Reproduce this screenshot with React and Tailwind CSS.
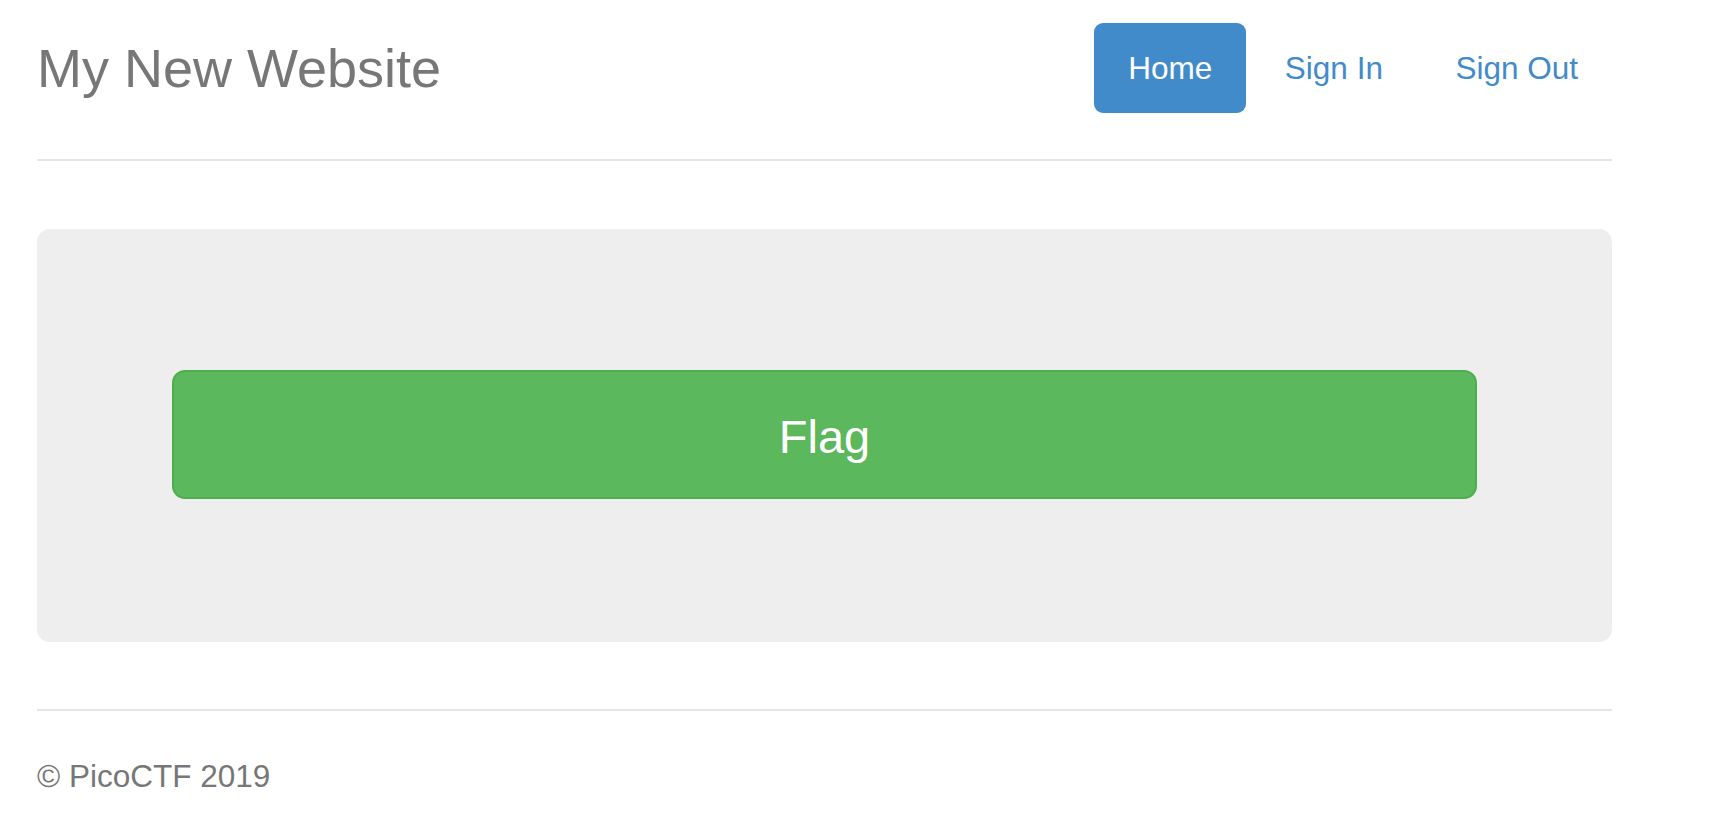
export default function App() {
  const links = [
    { label: "Home", active: true },
    { label: "Sign In" },
    { label: "Sign Out" },
  ];

  return (
    <div className="w-full min-h-screen bg-white font-['Liberation_Sans',Arial,sans-serif]">
      <div className="w-[1575px] ml-[37px]">
        {/* Header */}
        <header className="flex flex-row items-start justify-between pt-[23px] pb-[46px] border-b-2 border-[#e5e5e5]">
          <h3 className="m-0 text-[54px] leading-[90px] text-[#777]">My New Website</h3>
          <ul className="flex flex-row">
            {links.map((link) => (
              <li key={link.label} className="ml-[4.5px]">
                <a
                  href="#"
                  className={
                    link.active
                      ? "block px-[34px] py-[22px] pt-[23px] text-[31.5px] leading-[45px] rounded-[9px] bg-[#428bca] text-white"
                      : "block px-[34px] py-[22px] pt-[23px] text-[31.5px] leading-[45px] rounded-[9px] text-[#428bca]"
                  }
                >
                  {link.label}
                </a>
              </li>
            ))}
          </ul>
        </header>

        {/* Jumbotron */}
        <div className="mt-[68px] h-[413px] bg-[#eee] rounded-[13px] px-[135px] pt-[141px]">
          <button className="w-full h-[129px] pt-[6px] rounded-[13px] border-2 border-[#4cae4c] bg-[#5cb85c] text-white text-[47px]">
            Flag
          </button>
        </div>

        {/* Footer */}
        <footer className="mt-[67px] border-t-2 border-[#e5e5e5] pt-[43px]">
          <p className="text-[31.5px] leading-[45px] text-[#777]">© PicoCTF 2019</p>
        </footer>
      </div>
    </div>
  );
}
